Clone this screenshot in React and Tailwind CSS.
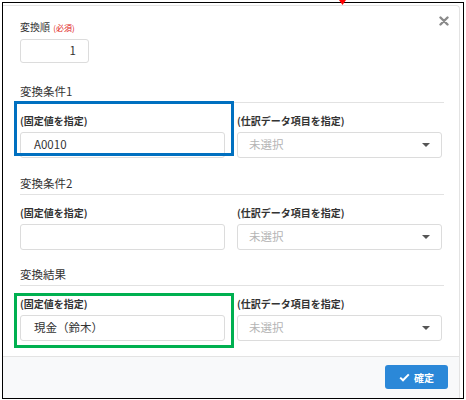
import React from 'react';

const font = { fontFamily: '"Noto Sans CJK JP", "Noto Sans", sans-serif' };

const Caret = () => (
    <svg width="8" height="4" viewBox="0 0 8 4" className="text-[#555]">
        <path d="M0 0 L8 0 L4 4 Z" fill="currentColor" />
    </svg>
);

const TextBox = ({ value }) => (
    <div className="h-[26px] rounded-[3px] border border-[#dcdcdc] bg-white pl-[13px] flex items-center text-[11.5px] text-[#333]">
        {value}
    </div>
);

const SelectBox = () => (
    <div className="h-[26px] rounded-[3px] border border-[#dcdcdc] bg-white pl-[11px] pr-[11px] flex items-center justify-between text-[11.5px] text-[#b5b5b5]">
        <span>未選択</span>
        <Caret />
    </div>
);

const Section = ({ title, value, highlight }) => (
    <div className="relative">
        <div className="text-[11.5px] leading-[16px] text-[#333] pb-[3px] border-b border-[#e2e2e2]">{title}</div>
        <div className="grid grid-cols-[205px_205px] gap-x-[12px] pt-[11px]">
            <div>
                <div className="text-[10px] leading-[14px] font-bold text-[#333] mb-[4px]">(固定値を指定)</div>
                <TextBox value={value} />
            </div>
            <div>
                <div className="text-[10px] leading-[14px] font-bold text-[#333] mb-[4px]">(仕訳データ項目を指定)</div>
                <SelectBox />
            </div>
        </div>
        {/* annotation frame */}
        {highlight && (
            <div className={`absolute left-[-6px] w-[220px] h-[55px] border-[3px] ${highlight}`} />
        )}
    </div>
);

export default function App() {
    return (
        <div className="relative w-[466px] h-[400px] bg-white" style={font}>
            <div className="absolute left-[2px] top-[2px] w-[462px] h-[397px] border-[1.5px] border-black bg-white flex">
                <div className="flex-1 mt-[2px] mr-[3px] flex flex-col border-r border-t border-[#e3e3e3] rounded-tr-[4px] relative">
                    <button className="absolute right-[9px] top-[9px] w-[12px] h-[12px] flex items-center justify-center">
                        <svg width="10" height="10" viewBox="0 0 10 10">
                            <path d="M1.5 1.5 L8.5 8.5 M8.5 1.5 L1.5 8.5" stroke="#8a8a8a" strokeWidth="2.4" strokeLinecap="round" />
                        </svg>
                    </button>

                    <div className="flex-1 pl-[17px] pr-[15px] pt-[14px]">
                        <div className="text-[10px] leading-[14px] text-[#333] mb-[4px]">
                            変換順 <span className="text-[8px] text-[#e02020] ml-[1px]">(必須)</span>
                        </div>
                        <div className="w-[69px] h-[24px] rounded-[3px] border border-[#dcdcdc] flex items-center justify-end pr-[12px] text-[11.5px] text-[#333]">1</div>

                        <div className="mt-[20px]">
                            <Section title="変換条件1" value="A0010" highlight="top-[18px] border-[#0070c0]" />
                        </div>
                        <div className="mt-[17px]">
                            <Section title="変換条件2" value="" />
                        </div>
                        <div className="mt-[16px]">
                            <Section title="変換結果" value="現金（鈴木）" highlight="top-[27px] border-[#00b050]" />
                        </div>
                    </div>

                    <div className="h-[42px] border-t border-[#e3e3e3] bg-[#f8f9fa] flex items-center justify-end pr-[11px] pb-[1px]">
                        <button className="w-[63px] h-[24px] rounded-[3px] bg-[#2b88d8] flex items-center justify-center gap-[4px] text-white text-[10px] font-bold">
                            <svg width="11" height="9" viewBox="0 0 11 9">
                                <path d="M1.2 4.6 L4 7.3 L9.8 1.4" stroke="white" strokeWidth="2" fill="none" />
                            </svg>
                            確定
                        </button>
                    </div>
                </div>
            </div>
            {/* red arrow tip */}
            <svg className="absolute left-[339px] top-0" width="7" height="5" viewBox="0 0 7 5">
                <path d="M0 0 L7 0 L3.5 5 Z" fill="#ff0000" />
            </svg>
        </div>
    );
}
